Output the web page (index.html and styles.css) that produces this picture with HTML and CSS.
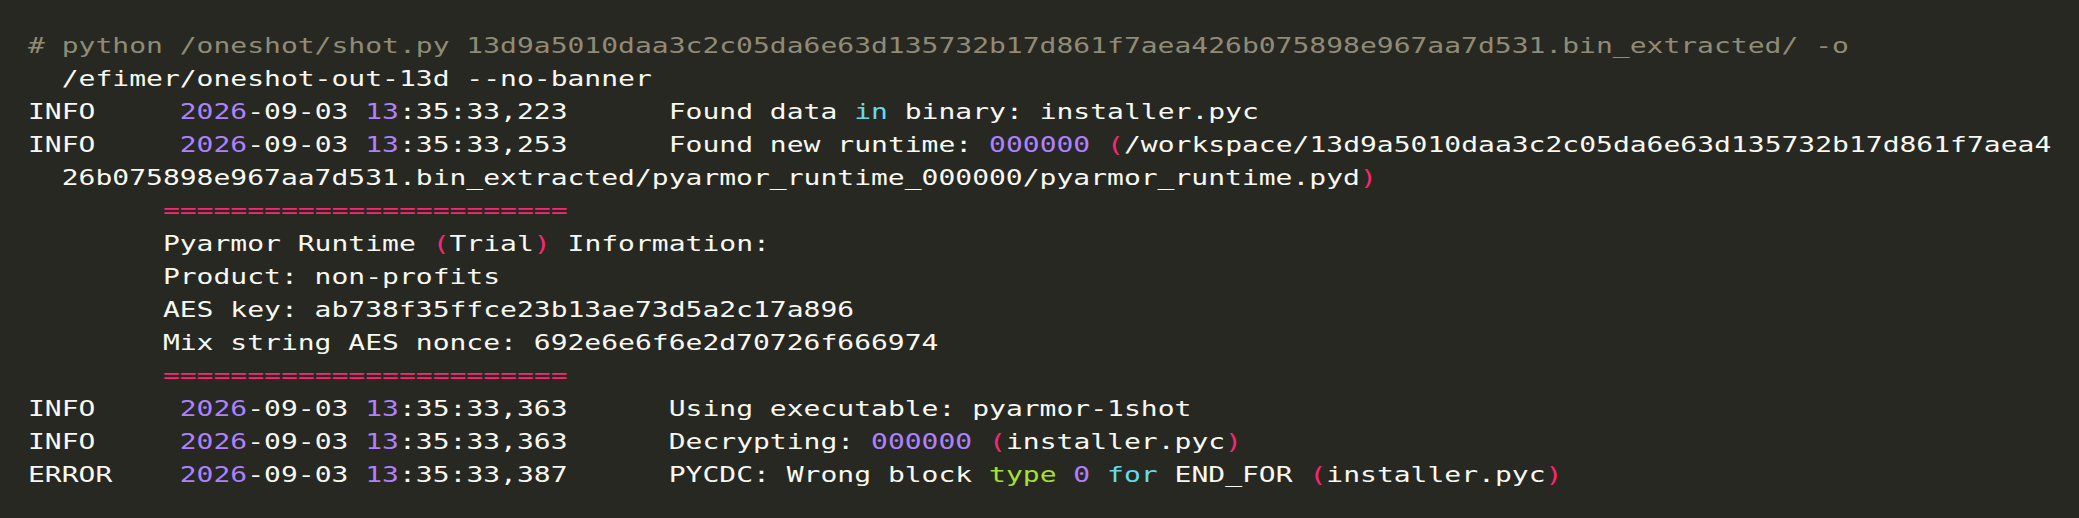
FILE: index.html
```html
<!DOCTYPE html>
<html lang="en">
<head>
<meta charset="utf-8">
<title>Terminal output</title>
<link rel="stylesheet" href="styles.css">
</head>
<body>
<main class="terminal">
<pre class="log"><span class="c"># python /oneshot/shot.py 13d9a5010daa3c2c05da6e63d135732b17d861f7aea426b075898e967aa7d531.bin_extracted/ -o</span>
  /efimer/oneshot-out-13d --no-banner
INFO     <span class="n">2026</span>-09-03 <span class="n">13</span>:35:33,223      Found data <span class="k">in</span> binary: installer.pyc
INFO     <span class="n">2026</span>-09-03 <span class="n">13</span>:35:33,253      Found new runtime: <span class="n">000000</span> <span class="p">(</span>/workspace/13d9a5010daa3c2c05da6e63d135732b17d861f7aea4
  26b075898e967aa7d531.bin_extracted/pyarmor_runtime_000000/pyarmor_runtime.pyd<span class="p">)</span>
        <span class="p">========================</span>
        Pyarmor Runtime <span class="p">(</span>Trial<span class="p">)</span> Information:
        Product: non-profits
        AES key: ab738f35ffce23b13ae73d5a2c17a896
        Mix string AES nonce: 692e6e6f6e2d70726f666974
        <span class="p">========================</span>
INFO     <span class="n">2026</span>-09-03 <span class="n">13</span>:35:33,363      Using executable: pyarmor-1shot
INFO     <span class="n">2026</span>-09-03 <span class="n">13</span>:35:33,363      Decrypting: <span class="n">000000</span> <span class="p">(</span>installer.pyc<span class="p">)</span>
ERROR    <span class="n">2026</span>-09-03 <span class="n">13</span>:35:33,387      PYCDC: Wrong block <span class="g">type</span> <span class="n">0</span> <span class="k">for</span> END_FOR <span class="p">(</span>installer.pyc<span class="p">)</span></pre>
</main>
</body>
</html>
```

FILE: styles.css
```css
html, body {
  margin: 0;
  padding: 0;
  background: #272822;
}

.terminal {
  width: 2079px;
  height: 518px;
  box-sizing: border-box;
  padding: 29px 0 0 28px;
  background: #272822;
  overflow: hidden;
}

.log {
  margin: 0;
  font-family: "DejaVu Sans Mono", monospace;
  font-size: 22px;
  line-height: 33px;
  color: #f8f8f2;
  white-space: pre;
  transform: scaleX(1.2729);
  transform-origin: 0 0;
}

.c { color: #908b76; }
.n { color: #ae81ff; }
.k { color: #66d9ef; }
.p { color: #f92672; }
.g { color: #a6e22e; }
```
